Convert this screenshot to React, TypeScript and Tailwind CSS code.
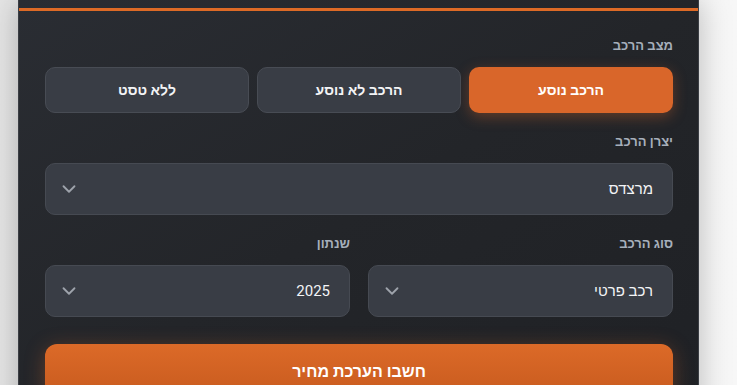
import React from "react";
import { ChevronDown } from "lucide-react";

function Select({ value }: { value: string }) {
  return (
    <div className="flex h-[52px] items-center justify-between rounded-[10px] border border-[#464a52] bg-[#393d45] pr-[19px] pl-[12px]">
      <span className="text-[15px] text-[#f3f4f6]">{value}</span>
      <ChevronDown size={22} strokeWidth={2} className="text-[#9ea3ab]" />
    </div>
  );
}

function Label({ children }: { children: React.ReactNode }) {
  return <div className="mb-[12px] h-[18px] text-[13px] leading-[18px] font-bold text-[#a6afbb]">{children}</div>;
}

export default function App() {
  return (
    <div
      dir="rtl"
      className="h-[385px] w-[737px] overflow-hidden bg-gradient-to-r from-[#e6e6e6] via-[#f4f4f4] to-[#f7f7f7]"
      style={{ fontFamily: 'Roboto, sans-serif' }}
    >
      <div className="mr-[38px] h-[420px] w-[681px] bg-gradient-to-br from-[#2a2d33] via-[#232529] to-[#1f2125] shadow-[0_0_30px_rgba(0,0,0,0.25)] border-x border-[#3b3e44]">
        <div className="h-[8px]" />
        <div className="h-[3px] bg-[#dd6a26]" />
        <div className="pr-[25px] pl-[26px] pt-[26px]">
          <Label>מצב הרכב</Label>
          <div className="grid grid-cols-3 gap-[8px]">
            <button className="h-[46px] rounded-[10px] bg-[#d9662a] text-[14px] font-bold text-white shadow-[0_4px_14px_rgba(217,102,42,0.35)]">
              הרכב נוסע
            </button>
            <button className="h-[46px] rounded-[10px] border border-[#484c54] bg-[#393d45] text-[14px] font-bold text-[#f3f4f6]">
              הרכב לא נוסע
            </button>
            <button className="h-[46px] rounded-[10px] border border-[#484c54] bg-[#393d45] text-[14px] font-bold text-[#f3f4f6]">
              ללא טסט
            </button>
          </div>

          <div className="mt-[20px]">
            <Label>יצרן הרכב</Label>
            <Select value="מרצדס" />
          </div>

          <div className="mt-[20px] grid grid-cols-2 gap-[18px]">
            <div>
              <Label>סוג הרכב</Label>
              <Select value="רכב פרטי" />
            </div>
            <div>
              <Label>שנתון</Label>
              <Select value="2025" />
            </div>
          </div>

          <button className="mt-[27px] flex h-[56px] w-full items-center justify-center rounded-[12px] bg-gradient-to-b from-[#dc6a28] to-[#c75a1e] text-[16px] font-bold text-white shadow-[0_4px_20px_rgba(217,102,42,0.35)]">
            חשבו הערכת מחיר
          </button>
        </div>
      </div>
    </div>
  );
}
